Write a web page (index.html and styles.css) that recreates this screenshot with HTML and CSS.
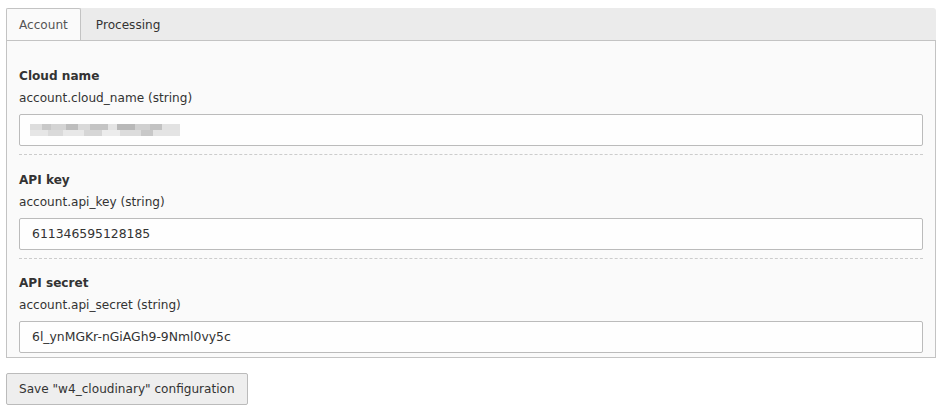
FILE: index.html
```html
<!DOCTYPE html>
<html>
<head>
<meta charset="utf-8">
<link rel="stylesheet" href="styles.css">
</head>
<body>
<div class="page">
  <div class="tabs">
    <div class="tab active">Account</div>
    <div class="tab">Processing</div>
  </div>
  <div class="panel">
    <div class="field">
      <div class="label">Cloud name</div>
      <div class="desc">account.cloud_name (string)</div>
      <div class="input"><span class="blur"></span></div>
    </div>
    <div class="field">
      <div class="label">API key</div>
      <div class="desc">account.api_key (string)</div>
      <div class="input">611346595128185</div>
    </div>
    <div class="field last">
      <div class="label">API secret</div>
      <div class="desc">account.api_secret (string)</div>
      <div class="input">6l_ynMGKr-nGiAGh9-9Nml0vy5c</div>
    </div>
  </div>
  <div class="actions">
    <button class="btn">Save "w4_cloudinary" configuration</button>
  </div>
</div>
</body>
</html>
```
FILE: styles.css
```css
html, body {
  margin: 0;
  padding: 0;
  background: #fff;
}
body {
  font-family: "DejaVu Sans", Verdana, sans-serif;
  font-size: 12.1px;
  color: #333;
}
.page {
  padding: 8px 13px 0 6px;
}
.tabs {
  display: flex;
  height: 32px;
  background: #ebebeb;
  border-radius: 0 3px 0 0;
}
.tab {
  display: flex;
  align-items: center;
  padding: 2px 14px 0 15px;
  color: #333;
  line-height: 18px;
}
.tab.active {
  background: #fafafa;
  color: #555;
  border: 1px solid #c3c3c3;
  border-bottom: none;
  padding: 1px 12px 0;
  border-radius: 2px 2px 0 0;
}
.panel {
  background: #fafafa;
  border: 1px solid #c3c3c3;
  padding: 26px 12px 4px 12px;
}
.field {
  border-bottom: 1px dashed #ccc;
  padding-bottom: 8px;
  margin-bottom: 15.6px;
}
.field.last {
  border-bottom: none;
  padding-bottom: 0;
  margin-bottom: 0;
}
.label {
  font-weight: bold;
  line-height: 18px;
  margin-bottom: 4px;
}
.desc {
  line-height: 18px;
  margin-bottom: 7px;
}
.input {
  height: 30px;
  box-sizing: content-box;
  border: 1px solid #bbb;
  border-radius: 2px;
  background: #fefefe;
  display: flex;
  align-items: center;
  padding: 0 12px;
  line-height: 18px;
  font-size: 12.4px;
}
.blur {
  display: block;
  width: 150px;
  height: 12px;
  margin-left: -2px;
  background:
    linear-gradient(90deg, #ddd 0 8%, #c8c8c8 8% 14%, #d4d4d4 14% 24%, #bdbdbd 24% 32%, #d9d9d9 32% 40%, #c4c4c4 40% 52%, #e4e4e4 52% 58%, #b8b8b8 58% 70%, #d0d0d0 70% 80%, #c2c2c2 80% 88%, #e2e2e2 88% 100%) top / 100% 6px no-repeat,
    linear-gradient(90deg, #e6e6e6 0 12%, #dadada 12% 22%, #e8e8e8 22% 36%, #d6d6d6 36% 48%, #ececec 48% 60%, #dcdcdc 60% 74%, #c8c8c8 74% 82%, #e4e4e4 82% 100%) bottom / 100% 6px no-repeat;
}
.actions {
  padding-top: 15px;
}
.btn {
  font-family: "DejaVu Sans", Verdana, sans-serif;
  font-size: 12.1px;
  color: #333;
  background: #eee;
  border: 1px solid #bbb;
  border-radius: 2px;
  height: 32px;
  padding: 0 12px;
  margin: 0;
}
```
